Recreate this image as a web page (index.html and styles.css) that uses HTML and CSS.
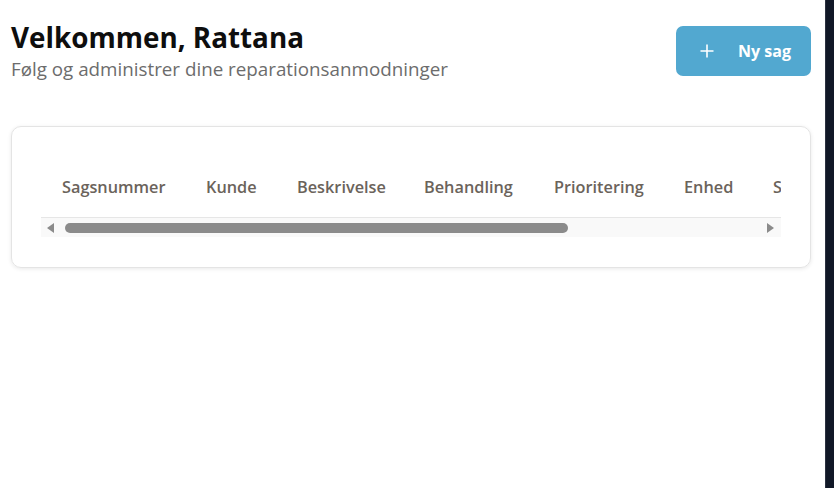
FILE: index.html
```html
<!DOCTYPE html>
<html lang="da">
<head>
<meta charset="utf-8">
<title>Sager</title>
<link rel="stylesheet" href="styles.css">
</head>
<body>
<div class="layout">
  <main class="main">
    <header class="page-head">
      <div class="titles">
        <h1 class="title">Velkommen, Rattana</h1>
        <p class="subtitle">Følg og administrer dine reparationsanmodninger</p>
      </div>
      <button class="new-btn" type="button">
        <svg class="plus" width="14" height="14" viewBox="0 0 14 14" aria-hidden="true"><path d="M7 0.5v13M0.5 7h13" stroke="#fff" stroke-width="1.6" fill="none"/></svg>
        <span>Ny sag</span>
      </button>
    </header>
    <section class="card">
      <div class="table-wrap">
        <table class="cases">
          <thead>
            <tr>
              <th>Sagsnummer</th>
              <th>Kunde</th>
              <th>Beskrivelse</th>
              <th>Behandling</th>
              <th>Prioritering</th>
              <th>Enhed</th>
              <th>Status</th>
              <th>Oprettet</th>
              <th>Handlinger</th>
            </tr>
          </thead>
          <tbody></tbody>
        </table>
      </div>
      <div class="hscroll" aria-hidden="true">
        <svg class="arrow arrow-left" width="7" height="10" viewBox="0 0 7 10"><path d="M7 0v10L0 5z" fill="#8b8b8b"/></svg>
        <div class="track"><div class="thumb"></div></div>
        <svg class="arrow arrow-right" width="7" height="10" viewBox="0 0 7 10"><path d="M0 0v10L7 5z" fill="#8b8b8b"/></svg>
      </div>
    </section>
  </main>
  <aside class="edge"></aside>
</div>
</body>
</html>
```
FILE: styles.css
```css
* { box-sizing: border-box; }
html, body { margin: 0; padding: 0; height: 100%; }
body {
  font-family: "Open Sans", "Noto Sans", sans-serif;
  background: #ffffff;
  color: #111111;
}
.layout { display: flex; height: 488px; overflow: hidden; }
.main { flex: 1; min-width: 0; padding: 18px 14px 0 11px; }
.edge { flex: none; width: 9px; background: #111827; border-left: 1px solid #2b3140; }

.page-head { display: flex; justify-content: space-between; align-items: flex-start; }
.title { margin: 0; font-size: 27.8px; font-weight: 700; line-height: 38px; color: #0e0e0e; }
.subtitle { margin: 0; font-size: 18.8px; line-height: 27px; color: #6c6c6c; }
.new-btn {
  margin-top: 8px;
  display: flex; align-items: center; gap: 24px;
  height: 50px; width: 135px; padding: 0 0 0 24px;
  border: none; border-radius: 7px;
  background: #52a8d0; color: #fff;
  font-family: inherit; font-size: 16px; font-weight: 700;
}
.plus { display: block; }

.card {
  margin-top: 43px;
  border: 1px solid #e4e4e4; border-radius: 10px;
  box-shadow: 0 1px 4px rgba(0,0,0,0.09);
  padding: 29px 29px 30px;
}
.table-wrap { overflow: hidden; }
.cases { border-collapse: collapse; white-space: nowrap; table-layout: fixed; width: 1020px; }
.cases th {
  text-align: left; padding: 21px 0 19px 21px; line-height: 21px;
  font-size: 16.3px; font-weight: 600; color: #6b635b;
  border-bottom: 1px solid #e6e6e6; overflow: hidden;
}
.cases th:nth-child(1) { width: 144px; }
.cases th:nth-child(2) { width: 91px; }
.cases th:nth-child(3) { width: 127px; }
.cases th:nth-child(4) { width: 130px; }
.cases th:nth-child(5) { width: 130px; }
.cases th:nth-child(6) { width: 89px; }
.cases th:nth-child(7) { width: 100px; }
.cases th:nth-child(8) { width: 100px; }

.hscroll { display: flex; align-items: center; height: 19px; background: #f9f9f9; }
.arrow { flex: none; display: block; }
.arrow-left { margin-left: 6px; }
.arrow-right { margin-right: 7px; }
.track { flex: 1; display: flex; align-items: center; padding-left: 11px; }
.thumb { width: 503px; height: 10px; border-radius: 5px; background: #8b8b8b; }
```
